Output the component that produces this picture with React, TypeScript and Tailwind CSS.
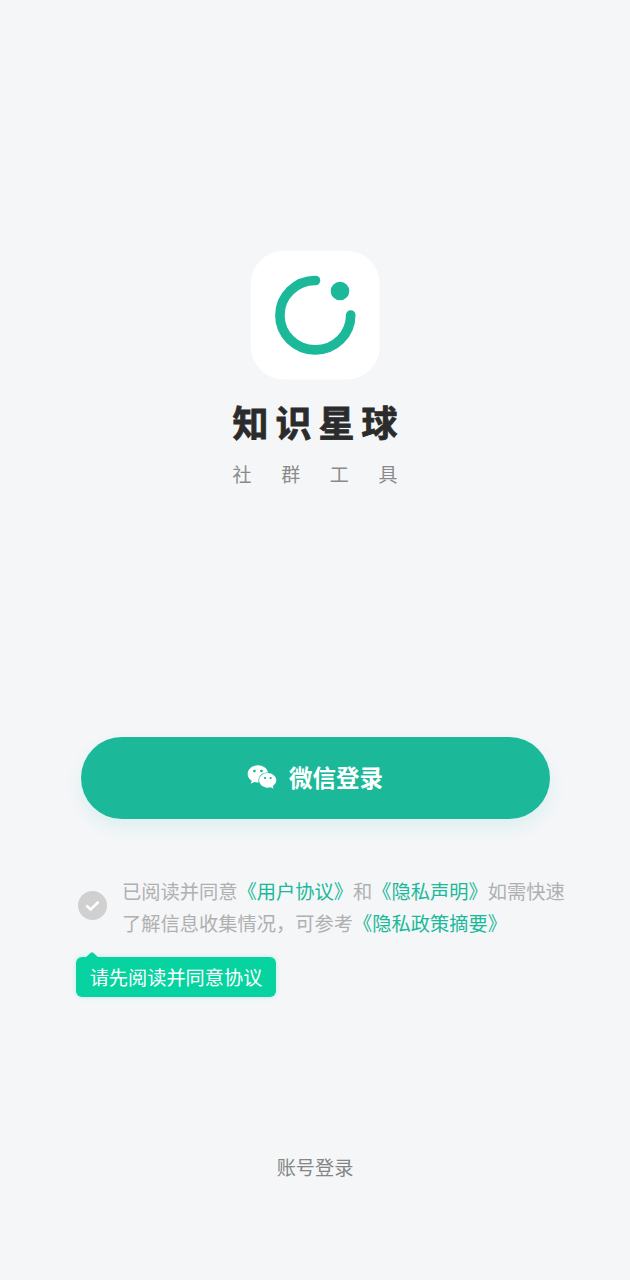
import { FaWeixin } from "react-icons/fa";

function LogoMark() {
  return (
    <svg viewBox="0 0 130 130" className="h-[130px] w-[130px]" fill="none">
      <rect x="0.8" y="0.8" width="129" height="128.6" rx="33" fill="#ffffff" />
      <path
        d="M65.5 30.5A35.4 34.7 0 1 0 100.7 65"
        stroke="#1bb999"
        strokeWidth="9.6"
        strokeLinecap="round"
      />
      <circle cx="90" cy="41" r="9.3" fill="#1bb999" />
    </svg>
  );
}

function Checkmark() {
  return (
    <span className="mt-[16px] flex h-[29px] w-[29px] shrink-0 items-center justify-center rounded-full bg-[#d0d0d0]">
      <svg viewBox="0 0 29 29" className="h-[29px] w-[29px]" fill="none">
        <path d="M8.3 14.4L12.6 18.4L20.6 10.8" stroke="#ffffff" strokeWidth="2.6" />
      </svg>
    </span>
  );
}

export default function App() {
  return (
    <main
      className="flex h-[1280px] w-[630px] flex-col items-center bg-[#f4f6f8]"
      style={{ fontFamily: "'Noto Sans CJK SC', sans-serif" }}
    >
      {/* Brand */}
      <header className="flex flex-col items-center pt-[250px]">
        <LogoMark />
        <h1 className="mt-[17px] flex h-[48px] w-[165px] items-center justify-between text-[36px] leading-[48px] font-bold text-[#2b2b2b] [-webkit-text-stroke:0.8px_#2b2b2b]">
          <span>知</span>
          <span>识</span>
          <span>星</span>
          <span>球</span>
        </h1>
        <p className="mt-[15px] flex w-[165px] justify-between text-[19px] leading-[28px] text-[#8a8a8a]">
          <span>社</span>
          <span>群</span>
          <span>工</span>
          <span>具</span>
        </p>
      </header>

      {/* WeChat login */}
      <button className="mt-[249px] flex h-[82px] w-[469px] items-center justify-center rounded-full bg-[#1bb999] pb-[2px] text-white shadow-[0_8px_16px_rgba(27,185,153,0.1)]">
        <FaWeixin className="mr-[12px] h-[30px] w-[30px]" />
        <span className="text-[23.5px] leading-[34px] font-bold">微信登录</span>
      </button>

      {/* Agreement */}
      <section className="mt-[56px] w-[630px] pl-[77px]">
        <div className="flex pl-[0.5px]">
          <Checkmark />
          <p className="ml-[15.5px] text-[19.25px] leading-[32px] whitespace-nowrap text-[#b0b0b0]">
            已阅读并同意<a className="text-[#1bb999]">《用户协议》</a>和
            <a className="text-[#1bb999]">《隐私声明》</a>如需快速
            <br />
            了解信息收集情况，可参考<a className="text-[#1bb999]">《隐私政策摘要》</a>
          </p>
        </div>
        <div className="relative mt-[18px] -ml-px flex h-[40px] w-[200px] items-center justify-center rounded-[6px] bg-[#06d3a0] text-[19.2px] leading-[28px] text-white shadow-[0_0_5px_rgba(6,211,160,0.2)]">
          <svg
            viewBox="0 0 14 6"
            className="absolute -top-[5px] left-[9px] h-[6px] w-[14px]"
            fill="#06d3a0"
          >
            <path d="M0 6L5.8 0.7Q7 -0.3 8.2 0.7L14 6Z" />
          </svg>
          请先阅读并同意协议
        </div>
      </section>

      <a className="mt-[156px] text-[19.2px] leading-[28px] text-[#858585]">账号登录</a>
    </main>
  );
}
